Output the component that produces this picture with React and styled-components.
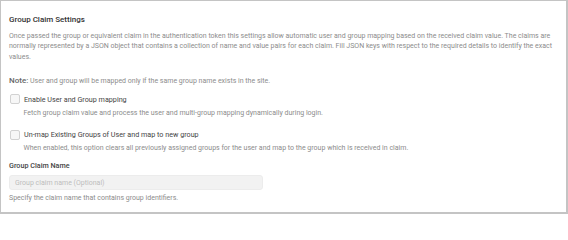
import React from "react";
import styled, { createGlobalStyle } from "styled-components";

const Global = createGlobalStyle`
  html, body { margin: 0; padding: 0; background: #fff; }
  body { font-family: Roboto, "Liberation Sans", Arial, sans-serif; }
  * { box-sizing: border-box; }
`;

const Panel = styled.section`
  width: 568px;
  height: 214px;
  border: 1px solid #c4c4c4;
  border-right-width: 2px;
  border-bottom-width: 2px;
  padding: 13px 9px 0 8px;
  display: flex;
  flex-direction: column;
  background: #fff;
`;

const Title = styled.h2`
  margin: 0;
  font-size: 8px;
  font-weight: 500;
  line-height: 12px;
  color: #333;
`;

const Text = styled.p`
  margin: ${(p) => p.$mt || 0}px 0 0 ${(p) => p.$indent || 0}px;
  font-size: 7px;
  line-height: 10.7px;
  color: #8c8c8c;
`;

const Note = styled.p`
  margin: 12px 0 0;
  font-size: 7px;
  line-height: 11px;
  color: #8c8c8c;
  strong {
    font-size: 8px;
    font-weight: 500;
    color: #666;
  }
`;

const CheckRow = styled.label`
  display: flex;
  align-items: center;
  gap: 4px;
  margin-top: ${(p) => p.$mt}px;
  height: 11px;
  font-size: 7.2px;
  color: #444;
`;

const Box = styled.span`
  width: 10px;
  height: 10px;
  margin-left: 1px;
  border: 1px solid #d2d2d2;
  border-radius: 2px;
  background: #f7f7f7;
  flex: none;
`;

const FieldLabel = styled.div`
  margin-top: 5.5px;
  font-size: 7.2px;
  font-weight: 500;
  line-height: 11px;
  color: #444;
`;

const Input = styled.input`
  margin-top: 4.5px;
  width: 254px;
  height: 15px;
  border: 1px solid #ececec;
  border-radius: 3px;
  background: #f2f2f2;
  padding: 0 5px;
  font-family: inherit;
  font-size: 7px;
  color: #555;
  outline: none;
  &::placeholder { color: #bdbdbd; }
`;

export default function App() {
  return (
    <>
      <Global />
      <Panel>
        <Title>Group Claim Settings</Title>
        <Text $mt={4.5}>
          Once passed the group or equivalent claim in the authentication token this settings allow automatic user and group mapping based on the received claim value. The claims are normally represented by a JSON object that contains a collection of name and value pairs for each claim. Fill JSON keys with respect to the required details to identify the exact values.
        </Text>
        <Note>
          <strong>Note:</strong> User and group will be mapped only if the same group name exists in the site.
        </Note>
        <CheckRow $mt={7}>
          <Box />
          Enable User and Group mapping
        </CheckRow>
        <Text $mt={3} $indent={14.5}>
          Fetch group claim value and process the user and multi-group mapping dynamically during login.
        </Text>
        <CheckRow $mt={11}>
          <Box />
          Un-map Existing Groups of User and map to new group
        </CheckRow>
        <Text $mt={3} $indent={14.5}>
          When enabled, this option clears all previously assigned groups for the user and map to the group which is received in claim.
        </Text>
        <FieldLabel>Group Claim Name</FieldLabel>
        <Input placeholder="Group claim name (Optional)" />
        <Text $mt={2.5}>Specify the claim name that contains group identifiers.</Text>
      </Panel>
    </>
  );
}
